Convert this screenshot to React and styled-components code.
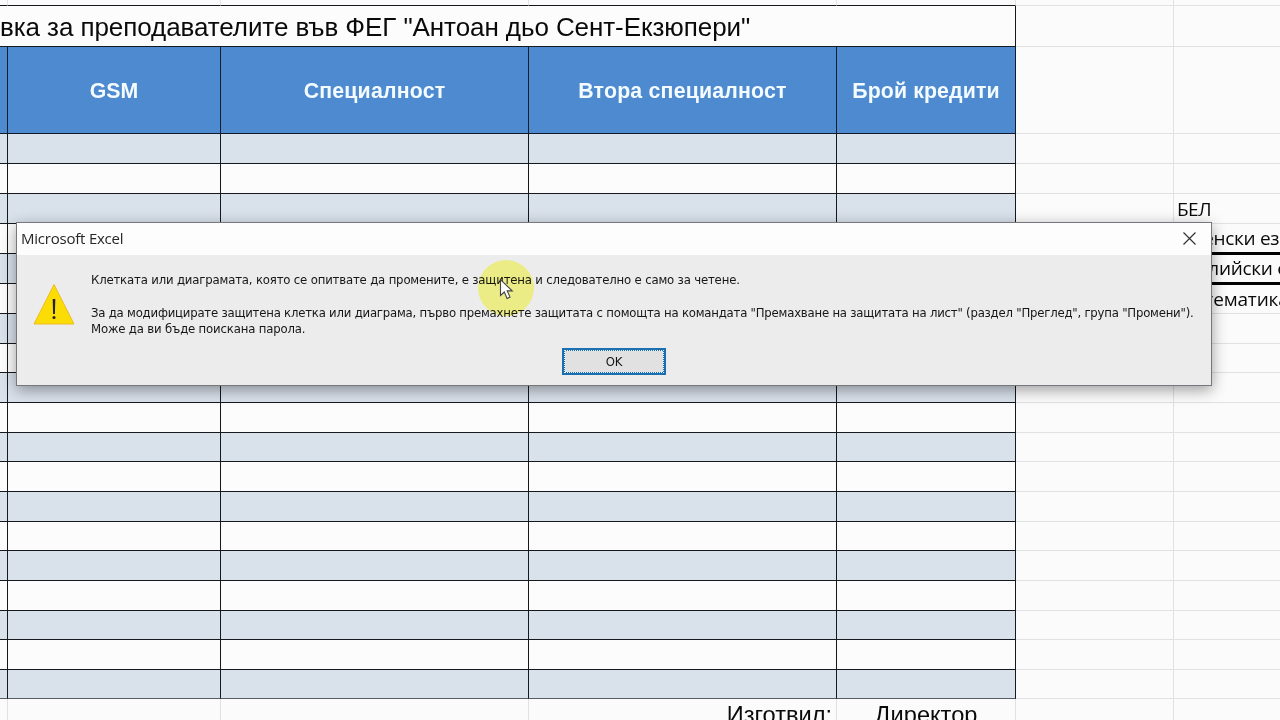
import React from 'react';
import styled, { createGlobalStyle } from 'styled-components';

const GlobalStyle = createGlobalStyle`
  * { box-sizing: border-box; }
  html, body { margin: 0; padding: 0; background: #fbfbfc; overflow: hidden; }
`;

const Screen = styled.main`
  position: relative;
  width: 1280px;
  height: 720px;
  overflow: hidden;
  background: #fbfbfc;
  color: #0a0a0a;
`;

const Row = styled.div`
  display: grid;
  grid-template-columns: 8px 213px 308px 308px 179px 158px 160px;
  height: ${(p) => p.$height}px;
`;

const GridCell = styled.div`
  border-right: 1px solid #e0e1e3;
  border-bottom: 1px solid #e0e1e3;
`;

const TableCell = styled.div`
  border-right: 1px solid #15181c;
  border-bottom: 1px solid ${(p) => p.$line || '#15181c'};
  background: ${(p) => (p.$banded ? '#d9e1eb' : '#fcfcfd')};
`;

const TopCell = styled(GridCell)`
  border-bottom-color: ${(p) => (p.$outside ? '#e0e1e3' : '#15181c')};
`;

const TitleCell = styled.div`
  grid-column: 1 / 6;
  display: flex;
  align-items: center;
  padding-top: 2px;
  border-right: 1px solid #15181c;
  border-bottom: 1px solid #15181c;
  background: #fcfcfc;
  font: 26px/30px "Liberation Sans", sans-serif;
  letter-spacing: -0.08px;
  white-space: nowrap;
`;

const HeaderCell = styled.div`
  display: flex;
  align-items: center;
  justify-content: center;
  padding-top: 2px;
  border-right: 1px solid #101c2c;
  border-bottom: 1px solid #101c2c;
  background: #4e8acf;
  color: #f3fbff;
  font: bold 21.3px/26px "Liberation Sans", sans-serif;
  letter-spacing: ${(p) => p.$tracking || 0}px;
  white-space: nowrap;
`;

const SubjectCell = styled.div`
  display: flex;
  align-items: center;
  padding-left: 3px;
  border-bottom: ${(p) => (p.$thick ? '3px solid #000' : '1px solid #e0e1e3')};
  margin-bottom: ${(p) => (p.$thick ? '-1px' : '0')};
  font: 19px/26px "Open Sans", "Noto Sans", sans-serif;
  letter-spacing: ${(p) => p.$tracking || 0}px;
  white-space: nowrap;
`;

const SignCell = styled.div`
  display: flex;
  justify-content: ${(p) => p.$align};
  padding: 3px ${(p) => (p.$align === 'center' ? 0 : 4)}px 0 0;
  border-right: 1px solid #e0e1e3;
  font: 23.6px/26px "Liberation Sans", sans-serif;
  white-space: nowrap;
`;

const Dialog = styled.section`
  position: absolute;
  left: 16px;
  top: 222px;
  width: 1196px;
  height: 164px;
  display: flex;
  flex-direction: column;
  border: 1px solid #74777b;
  background: #ececec;
  box-shadow: 0 4px 14px rgba(0, 0, 0, 0.38);
`;

const TitleBar = styled.header`
  display: flex;
  flex: none;
  align-items: center;
  justify-content: space-between;
  height: 32px;
  padding: 0 15px 2px 4px;
  background: #fdfdfd;
  color: #262626;
  font: 15px/20px "Open Sans", "Noto Sans", sans-serif;
  letter-spacing: -0.22px;
`;

const CloseIcon = styled.svg`
  width: 13px;
  height: 13px;
  stroke: #333;
  stroke-width: 1.2;
`;

const DialogBody = styled.div`
  display: flex;
  height: 93px;
  padding: 17px 0 0 16px;
`;

const WarningIcon = styled.svg`
  flex: none;
  width: 42px;
  height: 42px;
  margin-top: 11px;
`;

const Message = styled.div`
  margin-left: 16px;
  color: #161616;
  font: 13px/16.4px "DejaVu Sans Condensed", "DejaVu Sans", sans-serif;
  font-stretch: condensed;
  white-space: nowrap;
`;

const Line = styled.div`
  height: 16.3px;
  letter-spacing: ${(p) => p.$tracking || 0}px;
`;

const OkButton = styled.button`
  display: grid;
  place-items: center;
  align-self: flex-start;
  width: 104px;
  height: 27px;
  margin-left: 545px;
  padding: 0;
  border: 2px solid #1b6fae;
  background: #1b6fae;
`;

const OkFace = styled.span`
  display: grid;
  place-items: center;
  width: 100px;
  height: 23px;
  border: 1px dotted #e8f2f9;
  background: #e1e1e1;
  background-clip: padding-box;
  color: #161616;
  font: 13px/16px "DejaVu Sans Condensed", "DejaVu Sans", sans-serif;
  font-stretch: condensed;
  letter-spacing: -0.3px;
`;

const Spotlight = styled.div`
  position: absolute;
  left: 478px;
  top: 260px;
  width: 56px;
  height: 56px;
  border-radius: 50%;
  background: #ffff92;
  mix-blend-mode: multiply;
`;

const Pointer = styled.svg`
  position: absolute;
  left: 499px;
  top: 278px;
  width: 15px;
  height: 23px;
`;

const rows = [
  { height: 30 },
  { height: 30 },
  { height: 30, subject: 'БЕЛ', tracking: -0.5 },
  { height: 30, subject: 'Френски език', thick: true, tracking: -0.3 },
  { height: 30, subject: 'Английски език', thick: true, tracking: -0.3 },
  { height: 30, subject: 'Математика', tracking: -0.15 },
  { height: 30 },
  { height: 29 },
  { height: 30 },
  { height: 30 },
  { height: 29 },
  { height: 30 },
  { height: 30 },
  { height: 29 },
  { height: 30 },
  { height: 30 },
  { height: 29 },
  { height: 30 },
  { height: 29, line: '#565d66' },
];

function DataRow({ row, banded }) {
  return (
    <Row $height={row.height}>
      {[0, 1, 2, 3, 4].map((c) => (
        <TableCell key={c} $banded={banded} $line={row.line} />
      ))}
      <GridCell />
      <SubjectCell $thick={row.thick} $tracking={row.tracking}>{row.subject}</SubjectCell>
    </Row>
  );
}

export default function App() {
  return (
    <Screen>
      <GlobalStyle />
      <Row $height={6}>
        {[0, 1, 2, 3, 4].map((c) => <TopCell key={c} />)}
        <TopCell $outside />
        <TopCell $outside />
      </Row>
      <Row $height={41}>
        <TitleCell>вка за преподавателите във ФЕГ "Антоан дьо Сент-Екзюпери"</TitleCell>
        <GridCell />
        <GridCell />
      </Row>
      <Row $height={87}>
        <HeaderCell />
        <HeaderCell>GSM</HeaderCell>
        <HeaderCell $tracking={0.2}>Специалност</HeaderCell>
        <HeaderCell $tracking={0.2}>Втора специалност</HeaderCell>
        <HeaderCell $tracking={0.12}>Брой кредити</HeaderCell>
        <GridCell />
        <GridCell />
      </Row>
      {rows.map((row, i) => <DataRow key={i} row={row} banded={i % 2 === 0} />)}
      <Row $height={30}>
        <SignCell />
        <SignCell />
        <SignCell />
        <SignCell $align="flex-end">Изготвил:</SignCell>
        <SignCell $align="center">Директор</SignCell>
        <SignCell />
        <div />
      </Row>

      <Dialog>
        <TitleBar>
          <span>Microsoft Excel</span>
          <CloseIcon viewBox="0 0 13 13" fill="none">
            <path d="M.5.5 12.5 12.5M12.5.5.5 12.5" />
          </CloseIcon>
        </TitleBar>
        <DialogBody>
          <WarningIcon viewBox="0 0 42 42">
            <path d="M21 1.5 41 41H1Z" fill="#fbdc04" stroke="#eebc22" strokeWidth="1" strokeLinejoin="round" />
            <path d="M19.7 16h2.6l-.4 15h-1.8z" fill="#222" />
            <circle cx="21" cy="34.4" r="1.5" fill="#222" />
          </WarningIcon>
          <Message>
            <Line $tracking={-0.167}>Клетката или диаграмата, която се опитвате да промените, е защитена и следователно е само за четене.</Line>
            <Line />
            <Line $tracking={-0.212}>За да модифицирате защитена клетка или диаграма, първо премахнете защитата с помощта на командата "Премахване на защитата на лист" (раздел "Преглед", група "Промени").</Line>
            <Line $tracking={-0.17}>Може да ви бъде поискана парола.</Line>
          </Message>
        </DialogBody>
        <OkButton><OkFace>OK</OkFace></OkButton>
      </Dialog>

      <Spotlight />
      <Pointer viewBox="0 0 15 23">
        <path d="M1.5 1.5v16l3.8-3.5 2.8 6.4 2.9-1.3-2.8-6.2h5z" fill="#fff" stroke="#444" strokeWidth="1.1" />
      </Pointer>
    </Screen>
  );
}
